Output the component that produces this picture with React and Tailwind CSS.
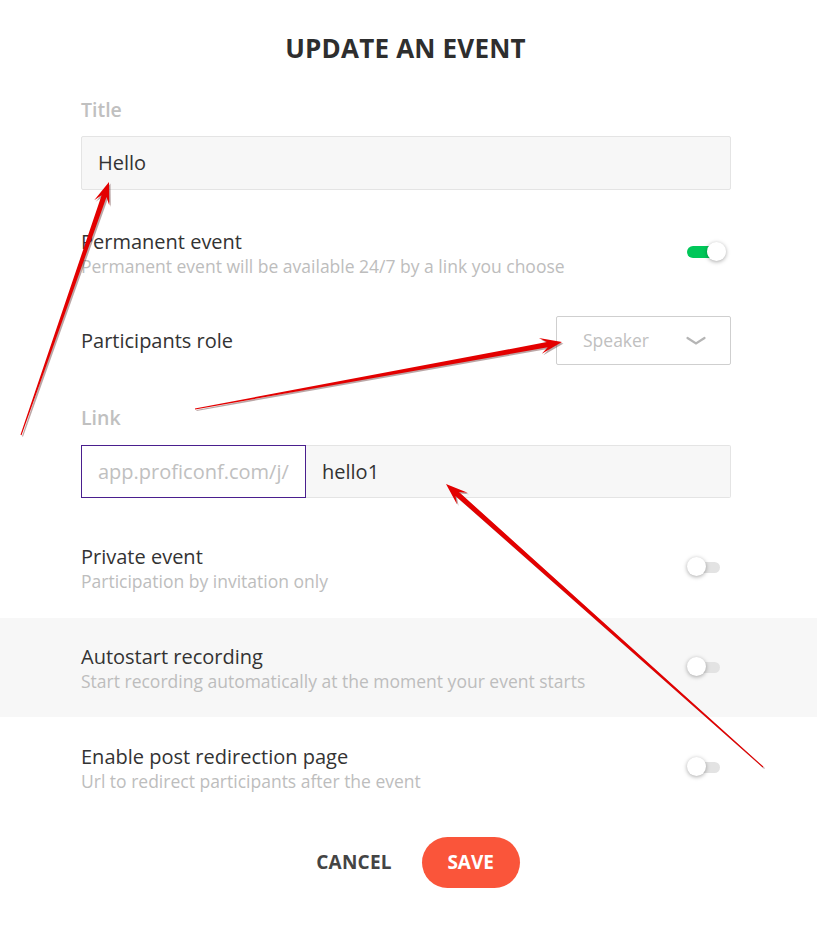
import React from "react";

function arrowPoints(x1, y1, x2, y2) {
  const dx = x2 - x1, dy = y2 - y1;
  const L = Math.hypot(dx, dy);
  const ux = dx / L, uy = dy / L;
  const nx = -uy, ny = ux;
  const headLen = 20, headW = 8, shaftW = 2.6, tailW = 0.5;
  const bx = x2 - ux * headLen, by = y2 - uy * headLen;
  const sx = bx + ux * 5, sy = by + uy * 5;
  const p = (x, y) => `${x.toFixed(1)},${y.toFixed(1)}`;
  return [
    p(x1 + nx * tailW, y1 + ny * tailW),
    p(sx + nx * shaftW, sy + ny * shaftW),
    p(bx - ux * 2 + nx * headW, by - uy * 2 + ny * headW),
    p(x2, y2),
    p(bx - ux * 2 - nx * headW, by - uy * 2 - ny * headW),
    p(sx - nx * shaftW, sy - ny * shaftW),
    p(x1 - nx * tailW, y1 - ny * tailW),
  ].join(" ");
}

function Arrow({ x1, y1, x2, y2 }) {
  const pts = arrowPoints(x1, y1, x2, y2);
  const shadow = arrowPoints(x1 + 1.5, y1 + 1.5, x2 + 1.5, y2 + 1.5);
  return (
    <g>
      <polygon points={shadow} fill="rgba(60,0,0,0.35)" />
      <polygon points={pts} fill="#e30000" />
    </g>
  );
}

function Toggle({ on }) {
  return (
    <div className="relative w-[40px] h-[20px] flex items-center">
      <div
        className={
          on
            ? "ml-0 w-[34px] h-[12px] rounded-full bg-[#00c759]"
            : "ml-[3px] w-[30px] h-[11px] rounded-full bg-[#e3e3e3]"
        }
      />
      <div
        className={
          on
            ? "absolute left-[20px] top-[0px] w-[19px] h-[19px] rounded-full bg-white shadow-[0_1px_4px_rgba(0,0,0,0.35)]"
            : "absolute left-0 top-[0px] w-[19px] h-[19px] rounded-full bg-white shadow-[0_1px_4px_rgba(0,0,0,0.35)]"
        }
      />
    </div>
  );
}

function ToggleRow({ title, sub, on }) {
  return (
    <div className="flex items-center justify-between">
      <div>
        <div className="text-[20px] leading-[24px] text-[#333333]">{title}</div>
        <div className="text-[17.5px] leading-[24px] text-[#bdbdbd]">{sub}</div>
      </div>
      <div className="mr-[4px] -mt-[4px]">
        <Toggle on={on} />
      </div>
    </div>
  );
}

export default function App() {
  return (
    <div
      className="relative w-[817px] h-[933px] bg-white overflow-hidden"
      style={{ fontFamily: '"Open Sans", "Noto Sans", sans-serif' }}
    >
      <div className="pt-[32px]">
        <h1 className="text-center text-[26px] leading-[32px] font-bold text-[#2e2e2e] tracking-[0.2px] pr-[6px]">
          UPDATE AN EVENT
        </h1>

        <div className="pl-[81px] w-[731px]">
          <div className="mt-[34px] text-[19.5px] leading-[24px] font-semibold text-[#c0c0c0]">Title</div>
          <div className="mt-[14px] h-[54px] bg-[#f7f7f7] border border-[#e4e4e4] rounded-[2px] flex items-center pl-[16px] text-[20px] text-[#333333]">
            Hello
          </div>

          <div className="mt-[40px]">
            <ToggleRow
              title="Permanent event"
              sub="Permanent event will be available 24/7 by a link you choose"
              on
            />
          </div>

          <div className="mt-[38px] flex items-center justify-between">
            <div className="text-[20px] leading-[24px] text-[#333333]">Participants role</div>
            <div className="w-[175px] h-[49px] border border-[#cfcfcf] rounded-[2px] flex items-center justify-between pl-[26px] pr-[24px]">
              <span className="text-[17.5px] text-[#c0c0c0]">Speaker</span>
              <svg width="20" height="10" viewBox="0 0 20 10">
                <path d="M1.5 2 L10 7.5 L18.5 2" fill="none" stroke="#b5b5b5" strokeWidth="2.2" strokeLinecap="round" />
              </svg>
            </div>
          </div>

          <div className="mt-[41px] text-[19.5px] leading-[24px] font-semibold text-[#c0c0c0]">Link</div>
          <div className="mt-[15px] flex h-[53px]">
            <div className="w-[225px] border border-[#4a1f8e] flex items-center pl-[16px] text-[20px] text-[#c0c0c0] whitespace-nowrap overflow-hidden">
              app.proficonf.com/j/
            </div>
            <div className="flex-1 bg-[#f7f7f7] border border-l-0 border-[#e4e4e4] rounded-r-[2px] flex items-center pl-[16px] text-[20px] text-[#333333]">
              hello1
            </div>
          </div>

          <div className="mt-[47px]">
            <ToggleRow title="Private event" sub="Participation by invitation only" />
          </div>
        </div>

        <div className="mt-[25px] bg-[#f7f7f7] pt-[27px] pb-[24px]">
          <div className="pl-[81px] w-[731px]">
            <ToggleRow
              title="Autostart recording"
              sub="Start recording automatically at the moment your event starts"
            />
          </div>
        </div>

        <div className="pl-[81px] w-[731px] mt-[28px]">
          <ToggleRow
            title="Enable post redirection page"
            sub="Url to redirect participants after the event"
          />
        </div>

        <div className="mt-[44px] flex justify-center items-center gap-[30px] pl-[19px]">
          <button className="text-[19px] font-bold text-[#444444] tracking-[0.2px] px-0">CANCEL</button>
          <button className="w-[98px] h-[51px] rounded-full bg-[#fa553a] text-white text-[19px] font-bold">
            SAVE
          </button>
        </div>
      </div>

      <svg className="absolute inset-0 pointer-events-none" width="817" height="933">
        <Arrow x1={21} y1={435} x2={109} y2={182} />
        <Arrow x1={195} y1={409} x2={562} y2={342} />
        <Arrow x1={763} y1={767} x2={446} y2={484} />
      </svg>
    </div>
  );
}
